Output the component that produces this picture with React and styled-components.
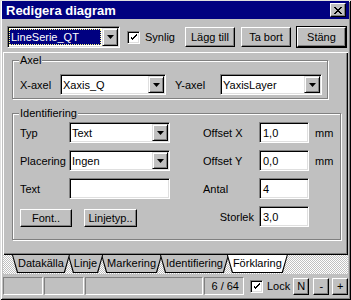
import React from 'react';
import styled, { createGlobalStyle } from 'styled-components';

const GlobalStyle = createGlobalStyle`
  html, body { margin: 0; padding: 0; background: #c0c0c0; }
  body { font-family: "Liberation Sans", Arial, sans-serif; font-size: 11px; color: #000; }
  * { box-sizing: border-box; }
`;

const raised = `
  border: 1px solid;
  border-color: #fff #000 #000 #fff;
  box-shadow: inset -1px -1px #808080;
`;

const sunken = `
  border: 1px solid;
  border-color: #808080 #fff #fff #808080;
  box-shadow: inset 1px 1px #000, inset -1px -1px #dfdfdf;
`;

const Window = styled.div`
  width: 351px;
  height: 300px;
  padding: 1px 2px 2px 2px;
  background: #c0c0c0;
  display: flex;
  flex-direction: column;
  overflow: hidden;
  box-shadow: inset 1px 1px #dfdfdf, inset -1px -1px #000, inset 2px 2px #fff, inset -2px -2px #808080;
`;

const TitleBar = styled.div`
  height: 18px;
  background: #000080;
  color: #fff;
  display: flex;
  align-items: center;
  justify-content: space-between;
  padding: 0 3px 0 4px;
  font-weight: bold;
  font-size: 13px;
`;

const CloseButton = styled.div`
  width: 16px;
  height: 14px;
  background: #c0c0c0;
  ${raised}
  display: flex;
  align-items: center;
  justify-content: center;
`;

const Toolbar = styled.div`
  display: flex;
  align-items: center;
  height: 22px;
  margin-top: 7px;
  padding-left: 5px;
`;

const Combo = styled.div`
  width: ${p => p.$w}px;
  height: ${p => p.$h || 21}px;
  background: #fff;
  ${sunken}
  padding: 1px;
  display: flex;
  align-items: stretch;
  flex-shrink: 0;
`;

const ComboText = styled.div`
  flex: 1;
  display: flex;
  align-items: center;
  padding-left: 1px;
  white-space: nowrap;
  ${p => p.$focus && `
    margin: 1px 1px 1px 0;
    padding-left: 2px;
    background: #000080;
    color: #fff;
    outline: 1px dotted #ffff80;
    outline-offset: -1px;
  `}
`;

const DropButton = styled.div`
  width: 16px;
  background: #c0c0c0;
  border: 1px solid;
  border-color: #dfdfdf #000 #000 #dfdfdf;
  box-shadow: inset 1px 1px #fff, inset -1px -1px #808080;
  display: flex;
  align-items: center;
  justify-content: center;
`;

const Field = styled.div`
  width: ${p => p.$w}px;
  height: 21px;
  background: #fff;
  ${sunken}
  padding: 1px 3px;
  display: flex;
  align-items: center;
`;

const CheckBox = styled.div`
  width: 13px;
  height: 13px;
  background: #fff;
  ${sunken}
  display: flex;
  align-items: center;
  justify-content: center;
  flex-shrink: 0;
  margin: ${p => p.$m || '0'};
`;

const Button = styled.div`
  width: ${p => p.$w}px;
  height: ${p => p.$h || 20}px;
  margin-left: ${p => p.$ml || 0}px;
  background: #c0c0c0;
  ${raised}
  ${p => p.$default && `
    outline: 1px solid #000;
    outline-offset: 0;
    box-shadow: inset -1px -1px #808080, 1px 1px #000;
  `}
  display: flex;
  align-items: center;
  justify-content: center;
  flex-shrink: 0;
`;

const Label = styled.span`
  width: ${p => (p.$w ? `${p.$w}px` : 'auto')};
  margin-left: ${p => p.$ml || 0}px;
  text-align: ${p => (p.$right ? 'right' : 'left')};
  padding-right: ${p => p.$pr || 0}px;
  flex-shrink: 0;
  white-space: nowrap;
`;

const Page = styled.div`
  margin: 4px 1px 0 1px;
  height: 203px;
  padding: 2px 0 0 9px;
  box-shadow: inset 1px 1px #fff, inset -1px -1px #000, inset -2px -2px #808080;
`;

const GroupBox = styled.fieldset`
  margin: ${p => p.$mt || 0}px 0 0 0;
  width: ${p => p.$w}px;
  padding: ${p => p.$pt}px 0 ${p => p.$pb}px 7px;
  border: 1px solid #808080;
  box-shadow: 1px 1px 0 #fff, inset 1px 1px 0 #fff;
  min-width: 0;
`;

const Legend = styled.legend`
  padding: 0 1px;
  margin-left: -1px;
  line-height: 13px;
  background: #c0c0c0;
`;

const AxisRow = styled.div`
  display: flex;
  align-items: center;
`;

const IdGrid = styled.div`
  display: grid;
  grid-template-columns: 49px 101px 33px 56px 50px auto;
  grid-template-rows: repeat(4, 21px);
  row-gap: 7px;
  align-items: center;
`;

const Unit = styled.span`
  padding-left: 6px;
`;

const ButtonPair = styled.div`
  grid-column: 1 / span 2;
  align-self: start;
  margin-top: 3px;
  display: flex;
`;

const TabStrip = styled.div`
  margin: 0 1px;
  height: 19px;
  padding-left: 9px;
  display: flex;
  align-items: flex-start;
  background: repeating-conic-gradient(#fff 0 25%, #c0c0c0 0 50%) 0 0 / 2px 2px;
`;

const Tab = styled.div`
  position: relative;
  z-index: ${p => p.$z};
  height: 18px;
  margin-left: ${p => (p.$first ? 0 : -2)}px;
  background: #000;
  clip-path: polygon(0 0, 100% 0, calc(100% - 5px) 100%, 5px 100%);
  display: flex;
`;

const TabFace = styled.div`
  margin: 0 1px 1px 1px;
  padding: 0 5px;
  background: ${p => (p.$active ? '#fff' : '#c0c0c0')};
  clip-path: polygon(0 0, 100% 0, calc(100% - 5px) 100%, 5px 100%);
  line-height: 16px;
  white-space: nowrap;
`;

const StatusBar = styled.div`
  margin: 3px 0 0 1px;
  height: 18px;
  display: flex;
  align-items: center;
`;

const StatusCell = styled.div`
  width: ${p => p.$w}px;
  height: 18px;
  margin-right: ${p => p.$mr || 0}px;
  border: 1px solid;
  border-color: #808080 #fff #fff #808080;
  padding-right: 4px;
  display: flex;
  align-items: center;
  justify-content: flex-end;
  flex-shrink: 0;
`;

const SmallButton = styled.div`
  width: 16px;
  height: 17px;
  margin-left: ${p => p.$ml}px;
  background: #c0c0c0;
  ${raised}
  display: flex;
  align-items: center;
  justify-content: center;
`;

const Arrow = () => (
  <svg width="7" height="4" viewBox="0 0 7 4">
    <polygon points="0,0 7,0 3.5,4" fill="#000" />
  </svg>
);

const Check = () => (
  <svg width="7" height="7" viewBox="0 0 7 7" shapeRendering="crispEdges">
    <path d="M0 2h1v3h1v1h1v-1h1v-1h1v-1h1v-1h1v-2h-1v1h-1v1h-1v1h-1v1h-1v-1h-1v-1h-1z" fill="#000" />
  </svg>
);

const CloseX = () => (
  <svg width="8" height="7" viewBox="0 0 8 7" shapeRendering="crispEdges">
    <path d="M0 0h2v1h1v1h2v-1h1v-1h2v1h-1v1h-1v1h-1v1h1v1h1v1h1v1h-2v-1h-1v-1h-2v1h-1v1h-2v-1h1v-1h1v-1h1v-1h-1v-1h-1v-1h-1z" fill="#000" />
  </svg>
);

const ComboBox = ({ w, h, text, focus }) => (
  <Combo $w={w} $h={h}>
    <ComboText $focus={focus}>{text}</ComboText>
    <DropButton><Arrow /></DropButton>
  </Combo>
);

const tabs = [
  { name: 'Datakälla', z: 5 },
  { name: 'Linje', z: 4 },
  { name: 'Markering', z: 3 },
  { name: 'Identifiering', z: 4 },
  { name: 'Förklaring', z: 9, active: true },
];

export default function App() {
  return (
    <>
      <GlobalStyle />
      <Window>
        <TitleBar>
          <span>Redigera diagram</span>
          <CloseButton><CloseX /></CloseButton>
        </TitleBar>

        <Toolbar>
          <ComboBox w={113} h={22} text="LineSerie_QT" focus />
          <CheckBox $m="0 5px 0 7px"><Check /></CheckBox>
          <Label>Synlig</Label>
          <Button $w={50} $ml={10}>Lägg till</Button>
          <Button $w={50} $ml={6}>Ta bort</Button>
          <Button $w={49} $ml={6} $default>Stäng</Button>
        </Toolbar>

        <Page>
          <GroupBox $w={316} $pt={7} $pb={3}>
            <Legend>Axel</Legend>
            <AxisRow>
              <Label $w={40}>X-axel</Label>
              <ComboBox w={106} text="Xaxis_Q" />
              <Label $w={45} $ml={9}>Y-axel</Label>
              <ComboBox w={102} text="YaxisLayer" />
            </AxisRow>
          </GroupBox>

          <GroupBox $w={329} $mt={8} $pt={2} $pb={12}>
            <Legend>Identifiering</Legend>
            <IdGrid>
              <Label>Typ</Label>
              <ComboBox w={101} text="Text" />
              <span />
              <Label>Offset X</Label>
              <Field $w={50}>1,0</Field>
              <Unit>mm</Unit>

              <Label>Placering</Label>
              <ComboBox w={101} text="Ingen" />
              <span />
              <Label>Offset Y</Label>
              <Field $w={50}>0,0</Field>
              <Unit>mm</Unit>

              <Label>Text</Label>
              <Field $w={101} />
              <span />
              <Label>Antal</Label>
              <Field $w={50}>4</Field>
              <span />

              <ButtonPair>
                <Button $w={52} $h={18}>Font..</Button>
                <Button $w={53} $h={18} $ml={12}>Linjetyp..</Button>
              </ButtonPair>
              <span />
              <Label $right $pr={5}>Storlek</Label>
              <Field $w={50}>3,0</Field>
              <span />
            </IdGrid>
          </GroupBox>
        </Page>

        <TabStrip>
          {tabs.map((t, i) => (
            <Tab key={t.name} $z={t.z} $first={i === 0}>
              <TabFace $active={t.active}>{t.name}</TabFace>
            </Tab>
          ))}
        </TabStrip>

        <StatusBar>
          <StatusCell $w={40} $mr={1} />
          <StatusCell $w={40} $mr={1} />
          <StatusCell $w={118} $mr={1} />
          <StatusCell $w={40}>6 / 64</StatusCell>
          <CheckBox $m="0 4px 0 6px"><Check /></CheckBox>
          <Label>Lock</Label>
          <SmallButton $ml={3}>N</SmallButton>
          <SmallButton $ml={4}>-</SmallButton>
          <SmallButton $ml={3}>+</SmallButton>
        </StatusBar>
      </Window>
    </>
  );
}
